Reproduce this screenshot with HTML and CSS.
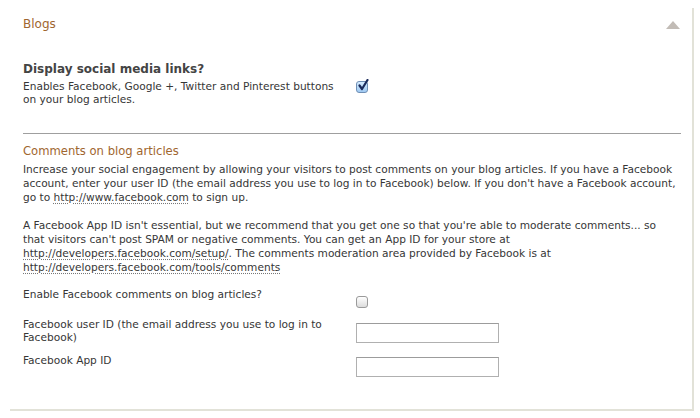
FILE: index.html
```html
<!DOCTYPE html>
<html>
<head>
<meta charset="utf-8">
<link rel="stylesheet" href="styles.css">
</head>
<body>
<div class="panel">
  <div class="panel-head">
    <h2 class="panel-title">Blogs</h2>
    <span class="toggle"><svg width="14" height="8" viewBox="0 0 14 8"><polygon points="7,0 14,8 0,8" fill="#c2bcb6"/></svg></span>
  </div>

  <div class="row social">
    <div class="label">
      <div class="label-strong">Display social media links?</div>
      <div class="label-desc">Enables Facebook, Google +, Twitter and Pinterest buttons on your blog articles.</div>
    </div>
    <div class="control">
      <span class="check checked"><svg width="12" height="13" viewBox="0 0 12 13"><path d="M2.5 6.5 L5 10 L10.5 1" fill="none" stroke="#1a2a5a" stroke-width="2.2" stroke-linecap="round" stroke-linejoin="round"/></svg></span>
    </div>
  </div>

  <div class="divider"></div>

  <h3 class="section-title">Comments on blog articles</h3>
  <p class="text">Increase your social engagement by allowing your visitors to post comments on your blog articles. If you have a Facebook account, enter your user ID (the email address you use to log in to Facebook) below. If you don't have a Facebook account, go to <a href="#">http://www.facebook.com</a> to sign up.</p>
  <p class="text app">A Facebook App ID isn't essential, but we recommend that you get one so that you're able to moderate comments... so that visitors can't post SPAM or negative comments. You can get an App ID for your store at <a href="#">http://developers.facebook.com/setup/</a>. The comments moderation area provided by Facebook is at <a href="#">http://developers.facebook.com/tools/comments</a></p>

  <div class="row field enable">
    <div class="label">Enable Facebook comments on blog articles?</div>
    <div class="control"><span class="check"></span></div>
  </div>
  <div class="row field userid">
    <div class="label">Facebook user ID (the email address you use to log in to Facebook)</div>
    <div class="control"><input class="textbox" type="text"></div>
  </div>
  <div class="row field appid">
    <div class="label">Facebook App ID</div>
    <div class="control"><input class="textbox" type="text"></div>
  </div>
</div>
</body>
</html>
```

FILE: styles.css
```css
html, body {
  margin: 0;
  padding: 0;
  background: #ffffff;
}
body {
  font-family: "DejaVu Sans", Verdana, sans-serif;
  font-size: 10.6px;
  color: #363636;
}
.panel {
  margin: 8px 0 0 10px;
  width: 658px;
  height: 394px;
  padding: 7px 11px 0 13px;
  border-right: 2px solid #e2e2d8;
  border-bottom: 2px solid #e2e2d8;
  box-sizing: content-box;
}
.panel-head {
  display: flex;
  justify-content: space-between;
  align-items: center;
  height: 18px;
}
.panel-title {
  margin: 0;
  font-size: 12px;
  font-weight: normal;
  color: #a0662f;
}
.toggle {
  display: flex;
  margin-right: 1px;
  margin-top: 2px;
}
.row {
  display: flex;
  align-items: flex-start;
}
.label {
  width: 330px;
  flex: none;
}
.social {
  margin-top: 29px;
}
.label-strong {
  font-weight: bold;
  font-size: 12px;
  color: #444;
  line-height: 15px;
}
.label-desc {
  line-height: 13px;
  margin-top: 3px;
  padding-right: 12px;
}
.control {
  padding-left: 3px;
}
.check {
  display: inline-flex;
  width: 10px;
  height: 10px;
  border: 1px solid #9a9a9a;
  border-radius: 3px;
  background: linear-gradient(#ffffff, #dcdcdc);
  position: relative;
}
.check.checked {
  border-color: #6f8fb5;
  background: linear-gradient(#d6ecff, #9fc9f2);
  margin-top: 19px;
}
.check.checked svg {
  position: absolute;
  left: 0;
  top: -3px;
}
.divider {
  margin-top: 27px;
  height: 1px;
  background: #9f9f9f;
}
.section-title {
  margin: 10px 0 0;
  font-size: 11.6px;
  font-weight: normal;
  color: #a0662f;
  line-height: 15px;
}
.text {
  margin: 3px 0 14px;
  line-height: 14px;
}
.text + .text {
  margin-top: 14px;
}
.text.app {
  max-width: 650px;
}
.text a {
  color: #363636;
  text-decoration: underline dotted #777;
  text-underline-offset: 2px;
}
.field .label {
  line-height: 13px;
}
.enable {
  margin-top: 0;
}
.enable .check {
  margin-top: 8px;
}
.userid {
  margin-top: 8px;
}
.appid {
  margin-top: 10px;
}
.textbox {
  display: block;
  width: 141px;
  height: 18px;
  margin: 0;
  padding: 0;
  box-sizing: content-box;
  border: 1px solid #b0b0b0;
  border-top-color: #9c9c9c;
  background: #fff;
}
.userid .textbox {
  margin-top: 5px;
}
.appid .textbox {
  margin-top: 3px;
}
```
